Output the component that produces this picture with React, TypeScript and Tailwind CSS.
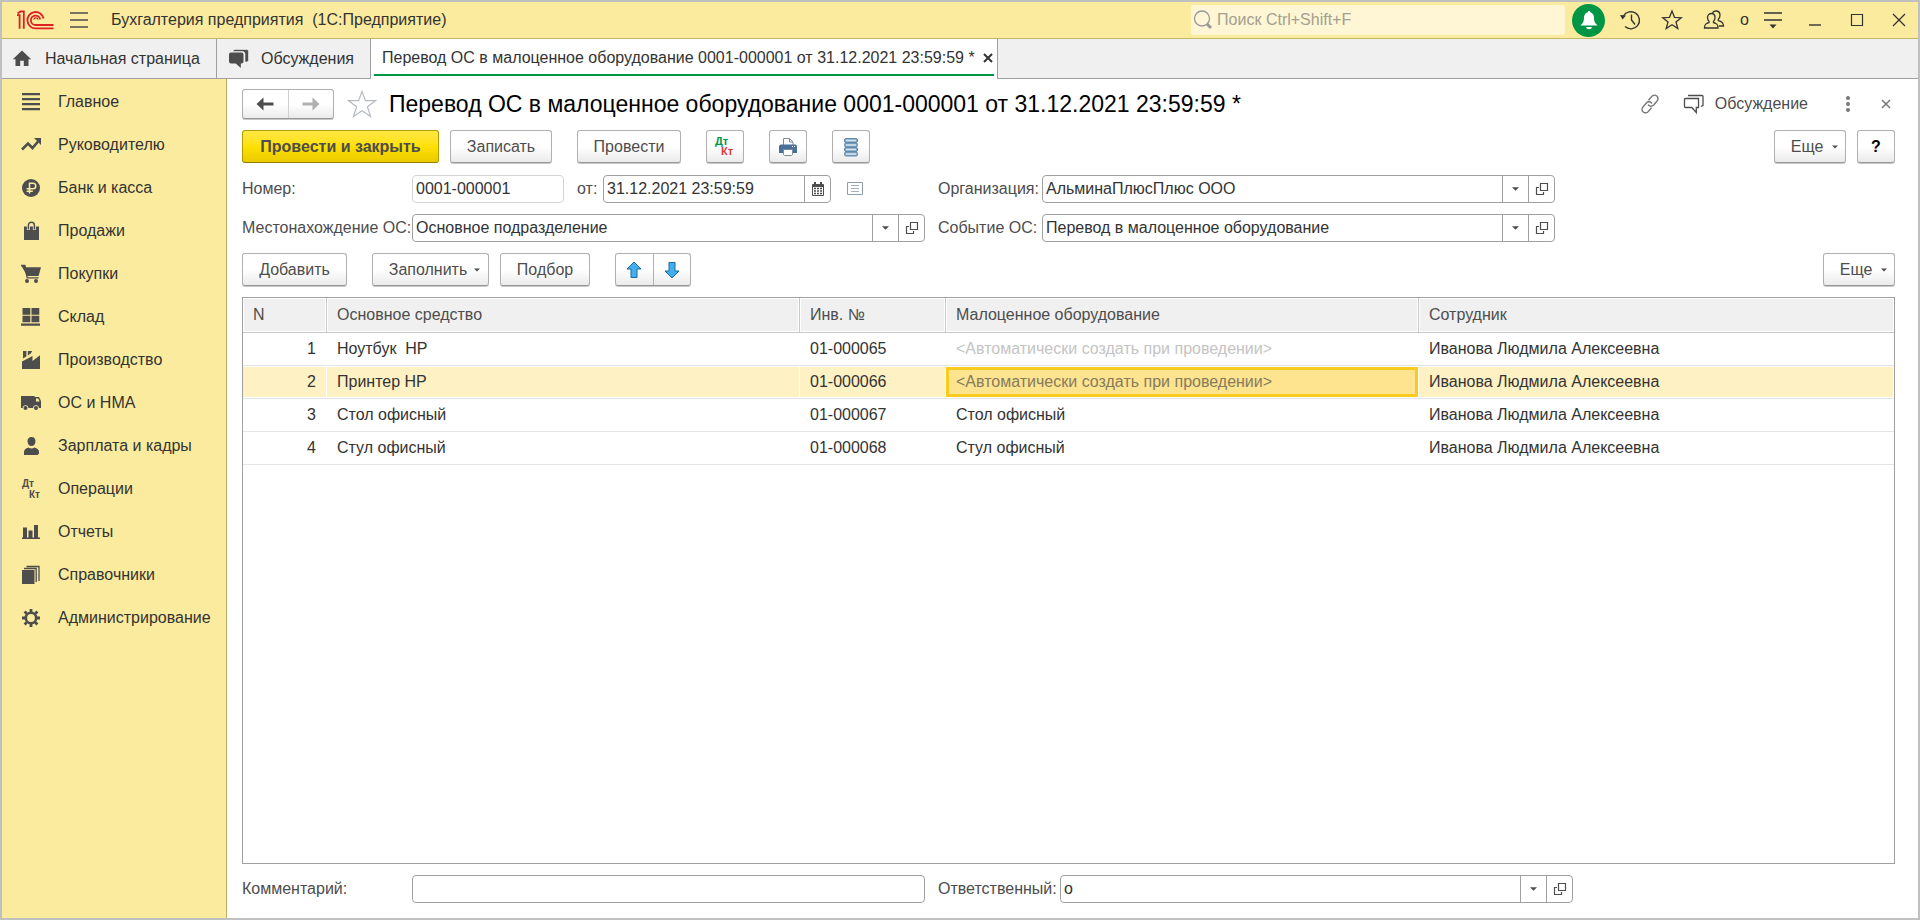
import React from 'react';

interface IconProps {
  children: React.ReactNode;
  w?: number;
  h?: number;
}

// Stroke/fill icons share one wrapper, colour comes from the parent text colour
const Icon: React.FC<IconProps> = ({ children, w = 20, h = 20 }) => (
  <svg width={w} height={h} viewBox={`0 0 ${w} ${h}`} fill="currentColor" className="shrink-0" aria-hidden="true">
    {children}
  </svg>
);

const Logo = () => (
  <svg width="38" height="20" viewBox="0 0 38 20" fill="none" stroke="#dd1f26" strokeWidth="1.8" aria-hidden="true">
    <path d="M0 5.2h2.6v13.6M0.6 3.6L3.6 1.4h3.2v17.4" />
    <path d="M26.6 8.5a8.2 8.2 0 1 0-7.8 9.9H36.5" />
    <path d="M23.2 9.4a4.7 4.7 0 1 0-4.4 5.6H36.5" />
    <path d="M21.2 9.6a2.4 2.4 0 0 0-4.6 0" strokeWidth="1.2" />
  </svg>
);

const TriangleDown = ({ w = 8 }: { w?: number }) => (
  <svg width={w} height="4" viewBox="0 0 8 4" fill="#4d4d4d" aria-hidden="true">
    <path d="M0 0h8L4 4z" />
  </svg>
);

const OpenIcon = () => (
  <Icon w={14} h={14}>
    <path d="M5.5 1.5h7v7h-7zM4 5.5H1.5v7h7V10" fill="none" stroke="#4d4d4d" strokeWidth="1.2" />
  </Icon>
);

interface MenuItem {
  label: string;
  icon: React.ReactNode;
}

const menuItems: MenuItem[] = [
  {
    label: 'Главное',
    icon: <path d="M1 1h18v2.2H1zM1 6h18v2.2H1zM1 11h18v2.2H1zM1 16h18v2.2H1z" />,
  },
  {
    label: 'Руководителю',
    icon: (
      <>
        <path d="M1 14.5L7 8.5l4.5 4.5 6-7" fill="none" stroke="currentColor" strokeWidth="2.6" />
        <path d="M13 3h7v7z" />
      </>
    ),
  },
  {
    label: 'Банк и касса',
    icon: (
      <>
        <circle cx="10" cy="10" r="9" />
        <path d="M8.5 15.5V5.2H12a2.8 2.8 0 0 1 0 5.6H5.6M5.6 13.2h6.2" fill="none" stroke="#fbeb9e" strokeWidth="1.5" />
      </>
    ),
  },
  {
    label: 'Продажи',
    icon: (
      <>
        <path d="M3 5.5h15V19H3z" />
        <path d="M7.4 9V4.4a3 3 0 0 1 6 0V9" fill="none" stroke="#fbeb9e" strokeWidth="3" />
        <path d="M7.4 8.5V4.2a3 3 0 0 1 6 0v4.3" fill="none" stroke="currentColor" strokeWidth="1.4" />
      </>
    ),
  },
  {
    label: 'Покупки',
    icon: (
      <>
        <path d="M0 1h4.4l.5 2.2H20L17.6 12H6.2z" />
        <path d="M0 1.5h3.6l2.6 12.3h11.4" fill="none" stroke="currentColor" strokeWidth="1.3" />
        <circle cx="6" cy="17" r="2" />
        <circle cx="15" cy="17" r="2" />
      </>
    ),
  },
  {
    label: 'Склад',
    icon: <path d="M1.5 1h7.8v6.8H1.5zM10.5 1h7.8v6.8h-7.8zM1.5 8.8h7.8v6.4H1.5zM10.5 8.8h7.8v6.4h-7.8zM0 16.4h19v2.4H0z" />,
  },
  {
    label: 'Производство',
    icon: <path d="M1 19v-7.5L11.5 6v5L19 5.2V19zM2 1h3.4v5.4L2 8.6zM6.8 1h4.4L9.8 3.4 6.8 5.6z" />,
  },
  {
    label: 'ОС и НМА',
    icon: (
      <>
        <path d="M0 3h13.6v12H0zM13 4h5l2 4v7h-7z" />
        <path d="M15 5.6h2.3l1.3 2.8H15z" fill="#fbeb9e" />
        <circle cx="4.5" cy="15" r="2.8" fill="#fbeb9e" />
        <circle cx="15" cy="15" r="2.8" fill="#fbeb9e" />
        <circle cx="4.5" cy="15" r="2" />
        <circle cx="15" cy="15" r="2" />
      </>
    ),
  },
  {
    label: 'Зарплата и кадры',
    icon: <path d="M10.5 1c2.7 0 4 1.8 4 4.3 0 2.6-1.6 4.8-4 4.8s-4-2.2-4-4.8C6.5 2.8 7.8 1 10.5 1zM3 19v-3c0-2.6 1.6-3.8 4.6-4.6 1.6 1.4 4.2 1.4 5.8 0 3 .8 4.6 2 4.6 4.6v1.5L16.5 19z" />,
  },
  {
    label: 'Операции',
    icon: (
      <>
        <text x="1" y="8" fontSize="10" fontWeight="bold" fontFamily="Liberation Sans, sans-serif">Дт</text>
        <text x="8" y="19" fontSize="10" fontWeight="bold" fontFamily="Liberation Sans, sans-serif">Кт</text>
      </>
    ),
  },
  {
    label: 'Отчеты',
    icon: <path d="M1 15.5h18V17H1zM2 5.5h4V16H2zM7.5 8.5h4v8h-4zM13 3h4v13h-4z" />,
  },
  {
    label: 'Справочники',
    icon: (
      <>
        <path d="M1 5h12.5v14H1z" />
        <path d="M3 3.5h12.2V17M5.5 1.5H18V16" fill="none" stroke="currentColor" strokeWidth="1.3" />
      </>
    ),
  },
  {
    label: 'Администрирование',
    icon: (
      <>
        <circle cx="10" cy="10" r="5.2" fill="none" stroke="currentColor" strokeWidth="2.6" />
        <path
          d="M10 1v3M10 16v3M1 10h3M16 10h3M3.6 3.6l2.2 2.2M14.2 14.2l2.2 2.2M3.6 16.4l2.2-2.2M14.2 5.8l2.2-2.2"
          stroke="currentColor"
          strokeWidth="2.8"
        />
      </>
    ),
  },
];

interface AssetRow {
  n: number;
  asset: string;
  inv: string;
  item: string;
  auto?: boolean;
  employee: string;
}

const AUTO_TEXT = '<Автоматически создать при проведении>';

const rows: AssetRow[] = [
  { n: 1, asset: 'Ноутбук  HP', inv: '01-000065', item: AUTO_TEXT, auto: true, employee: 'Иванова Людмила Алексеевна' },
  { n: 2, asset: 'Принтер HP', inv: '01-000066', item: AUTO_TEXT, auto: true, employee: 'Иванова Людмила Алексеевна' },
  { n: 3, asset: 'Стол офисный', inv: '01-000067', item: 'Стол офисный', employee: 'Иванова Людмила Алексеевна' },
  { n: 4, asset: 'Стул офисный', inv: '01-000068', item: 'Стул офисный', employee: 'Иванова Людмила Алексеевна' },
];

const SELECTED_ROW = 2;

const buttonBase =
  'flex h-[33px] shrink-0 items-center justify-center rounded-[3px] border border-[#b0b0b0] border-b-[#979797] bg-linear-to-b from-white from-50% to-[#ebebeb] text-[#4d4d4d] shadow-[0_1px_0_#c8c8c8]';

const Button: React.FC<{ className?: string; label?: string; children: React.ReactNode }> = ({
  className = '',
  label,
  children,
}) => (
  <button type="button" aria-label={label} className={`${buttonBase} ${className}`}>
    {children}
  </button>
);

interface ComboFieldProps {
  id: string;
  value: string;
  className: string;
}

const ComboField: React.FC<ComboFieldProps> = ({ id, value, className }) => (
  <div className={`flex h-7 shrink-0 overflow-hidden rounded-[4px] border border-[#a0a0a0] bg-white ${className}`}>
    <input id={id} type="text" defaultValue={value} className="min-w-0 flex-1 pl-[3px] text-[#333] outline-none" />
    <button type="button" aria-label="Выбрать" className="flex w-[26px] items-center justify-center border-l border-[#a0a0a0]">
      <TriangleDown w={7} />
    </button>
    <button type="button" aria-label="Открыть" className="flex w-[26px] items-center justify-center border-l border-[#a0a0a0]">
      <OpenIcon />
    </button>
  </div>
);

const TitleBar = () => (
  <header className="flex h-[37px] shrink-0 items-center border-b border-[#c4b763] bg-[#fbeb9e] pl-[15px] pr-3 text-[#333]">
    <Logo />
    <button type="button" aria-label="Меню" className="ml-[14px]">
      <Icon w={20} h={16}>
        <path d="M1 1h18M1 8h18M1 15h18" stroke="#4d4d4d" strokeWidth="1.5" />
      </Icon>
    </button>
    <h1 className="ml-[22px] whitespace-pre">Бухгалтерия предприятия  (1С:Предприятие)</h1>
    <label className="ml-auto flex h-[30px] w-[374px] items-center gap-1 rounded-[3px] bg-[#fef6d4] pl-[2px]">
      <Icon>
        <circle cx="9" cy="8.5" r="7.5" fill="none" stroke="#999" strokeWidth="1.3" />
        <path d="M14 14l4 4" stroke="#999" strokeWidth="3" />
      </Icon>
      <input
        type="search"
        aria-label="Поиск"
        placeholder="Поиск Ctrl+Shift+F"
        className="min-w-0 flex-1 outline-none placeholder:text-[#a3a08f]"
      />
    </label>
    <div className="flex items-center">
      <button type="button" aria-label="Уведомления" className="ml-[7px] flex size-[33px] items-center justify-center rounded-full bg-[#009646] text-white">
        <Icon>
          <path d="M10 1c.8 0 1.2.5 1.2 1.2C14 3 15 5.2 15 8c0 3.5 1 5 3.5 7.5h-17C4 13 5 11.5 5 8c0-2.8 1-5 3.8-5.8C8.800 1.500 9.200 1 10 1zM7 17h6c-.5 1.500-1.500 2.200-3 2.200S7.500 18.500 7 17z" />
        </Icon>
      </button>
      <button type="button" aria-label="История" className="ml-[15px]">
        <Icon w={22} h={22}>
          <path d="M3.4 7A8.6 8.6 0 1 1 5 17.6M11.5 5.5V11l3.5 4.5" fill="none" stroke="#333" strokeWidth="1.4" />
          <path d="M0 6l6 .5L2.5 10.5z" fill="#333" />
        </Icon>
      </button>
      <button type="button" aria-label="Избранное" className="ml-[19px]">
        <Icon w={22} h={22}>
          <path d="M11 2l2.5 6.3 6.7.4-5.2 4.2 1.8 6.6L11 15.8l-5.8 3.7L7 12.9 1.8 8.7l6.7-.4z" fill="none" stroke="#333" strokeWidth="1.3" />
        </Icon>
      </button>
      <button type="button" aria-label="Пользователи" className="ml-[20px]">
        <Icon w={22} h={22}>
          <g fill="none" stroke="#333" strokeWidth="1.3">
            <path d="M8.5 4.5c2.4 0 3.5 1.7 3.5 4 0 1.8-.6 3-1.5 3.8v1.2c3 .8 4.5 1.7 4.5 5.5H1.5c0-3.8 1.5-4.7 4.5-5.5v-1.2c-.9-.8-1.5-2-1.5-3.8 0-2.3 1.6-4 4-4z" />
            <path d="M9.5 3.8C10.3 2.5 11.5 2 13 2c2.6 0 4 1.7 4 4.2 0 1.8-.6 3-1.7 4v1.4c3.5.8 5.2 2 5.2 5.4h-4.7" />
          </g>
        </Icon>
      </button>
      <span className="ml-[15px]">о</span>
      <button type="button" aria-label="Настройки" className="ml-[14px]">
        <Icon w={20} h={18}>
          <path d="M1 2h18M1 9h18" stroke="#333" strokeWidth="1.5" />
          <path d="M6.5 13.5h7L10 17.5z" />
        </Icon>
      </button>
      <button type="button" aria-label="Свернуть" className="ml-[25px]">
        <Icon w={14} h={14}>
          <path d="M1 12h12" stroke="#333" strokeWidth="1.4" />
        </Icon>
      </button>
      <button type="button" aria-label="Развернуть" className="ml-[28px]">
        <Icon w={14} h={14}>
          <path d="M1.5 1.5h11v11h-11z" fill="none" stroke="#333" strokeWidth="1.2" />
        </Icon>
      </button>
      <button type="button" aria-label="Закрыть окно" className="ml-[28px]">
        <Icon w={14} h={14}>
          <path d="M1 1l12 12M13 1L1 13" stroke="#333" strokeWidth="1.3" />
        </Icon>
      </button>
    </div>
  </header>
);

const TabBar = () => (
  <nav className="flex h-10 shrink-0 border-b border-[#a0a0a0] bg-[#f0f0f0] text-[#333]">
    <button type="button" className="flex w-[215px] items-center border-r border-[#a0a0a0] pl-[10px]">
      <span className="text-[#4d4d4d]">
        <Icon>
          <path d="M10 1.5L0.8 10.3h2.7V17h4.7v-5.3h3.6V17h4.7v-6.7h2.7z" />
        </Icon>
      </span>
      <span className="ml-[13px]">Начальная страница</span>
    </button>
    <button type="button" className="flex w-[154px] items-center border-r border-[#a0a0a0] pl-[11px]">
      <span className="text-[#4d4d4d]">
        <Icon w={21} h={21}>
          <path d="M3 4.5h10.5a2 2 0 0 1 2 2v7a2 2 0 0 1-2 2h-.7v4.5l-5-4.5H3a2 2 0 0 1-2-2v-7a2 2 0 0 1 2-2z" />
          <path d="M5 3.5c0-1 .8-2 2-2h11.5c1 0 2 .8 2 2v8.5c0 1-.7 1.8-2 2h-1.5V6c0-1.500-1-2.500-2.500-2.500H5z" stroke="#f0f0f0" strokeWidth=".6" />
        </Icon>
      </span>
      <span className="ml-3">Обсуждения</span>
    </button>
    <div className="-mb-px flex w-[627px] border-r border-[#a0a0a0] bg-white px-[3px] pb-[3px]">
      <div className="flex flex-1 items-center justify-between whitespace-nowrap border-b-2 border-[#009646] pl-2 pt-[3px]">
        <button type="button">Перевод ОС в малоценное оборудование 0001-000001 от 31.12.2021 23:59:59 *</button>
        <button type="button" aria-label="Закрыть вкладку">
          <Icon w={12} h={12}>
            <path d="M2 2l8 8M10 2l-8 8" stroke="#333" strokeWidth="2" />
          </Icon>
        </button>
      </div>
    </div>
  </nav>
);

const Sidebar = () => (
  <aside className="w-[225px] shrink-0 border-r border-[#b8ad62] bg-[#fbeb9e] pt-px">
    <ul>
      {menuItems.map((item) => (
        <li key={item.label}>
          <button type="button" className="flex h-[43px] w-full items-center gap-[17px] pl-[19px] text-[#333]">
            <span className="text-[#4d4d4d]">
              <Icon>{item.icon}</Icon>
            </span>
            {item.label}
          </button>
        </li>
      ))}
    </ul>
  </aside>
);

const FormHeader = () => (
  <div className="flex h-[30px] items-center">
    <div className="flex h-[30px] w-[92px] rounded-[3px] border border-[#b0b0b0] border-b-[#979797] bg-linear-to-b from-white from-50% to-[#ebebeb] shadow-[0_1px_0_#c8c8c8]">
      <button type="button" aria-label="Назад" className="flex flex-1 items-center justify-center border-r border-[#cfcfcf] text-[#4d4d4d]">
        <Icon>
          <path d="M1.5 10L8.5 3.5v5h10v3h-10v5z" />
        </Icon>
      </button>
      <button type="button" aria-label="Вперед" className="flex flex-1 items-center justify-center text-[#b0b0b0]">
        <Icon>
          <path d="M18.5 10l-7-6.5v5h-10v3h10v5z" />
        </Icon>
      </button>
    </div>
    <button type="button" aria-label="В избранное" className="ml-[13px]">
      <Icon w={30} h={30}>
        <path d="M15 2.5l3.4 9.1 10 .1-8 6 3.2 9.8L15 21.7l-8.6 5.8 3.2-9.8-8-6 10-.1z" fill="none" stroke="#b4bac2" strokeWidth="1.2" />
      </Icon>
    </button>
    <h2 className="ml-3 whitespace-nowrap text-[23px] text-black">
      Перевод ОС в малоценное оборудование 0001-000001 от 31.12.2021 23:59:59 *
    </h2>
    <div className="ml-auto flex items-center text-[#4d4d4d]">
      <button type="button" aria-label="Ссылка">
        <Icon w={22} h={22}>
          <g fill="none" stroke="#777" strokeWidth="1.5" strokeLinecap="round" transform="rotate(-50 11 11)">
            <path d="M8.5 14.5H4a3.5 3.5 0 0 1 0-7h5.5a3.5 3.5 0 0 1 3.3 4M13.5 7.5H18a3.5 3.5 0 0 1 0 7h-5.5a3.5 3.5 0 0 1-3.3-4" />
          </g>
        </Icon>
      </button>
      <button type="button" className="ml-[22px] flex items-center gap-[10px]">
        <Icon w={22} h={22}>
          <path d="M2.5 5.5h13v9h-2.2v5l-4.5-5H2.5a1 1 0 0 1-1-1v-7a1 1 0 0 1 1-1zM5 2.5h14a1 1 0 0 1 1 1v9l-2 1" fill="none" stroke="#4d4d4d" strokeWidth="1.3" />
        </Icon>
        Обсуждение
      </button>
      <button type="button" aria-label="Дополнительно" className="ml-[37px] text-[#777]">
        <Icon w={6} h={18}>
          <circle cx="3" cy="3" r="2" />
          <circle cx="3" cy="9" r="2" />
          <circle cx="3" cy="15" r="2" />
        </Icon>
      </button>
      <button type="button" aria-label="Закрыть" className="ml-[29px] mr-[3px]">
        <Icon w={12} h={12}>
          <path d="M2 2l8 8M10 2l-8 8" stroke="#777" strokeWidth="1.5" />
        </Icon>
      </button>
    </div>
  </div>
);

const CommandBar = () => (
  <div className="mt-[11px] flex">
    <button
      type="button"
      className="h-[33px] w-[197px] rounded-[3px] border border-[#b09b00] border-b-[#8f7e00] bg-linear-to-b from-[#ffe83f] via-[#ffe000] to-[#ebcb00] font-bold text-[#4d4d4d]"
    >
      Провести и закрыть
    </button>
    <Button className="ml-[11px] w-[102px]">Записать</Button>
    <Button className="ml-[25px] w-[104px]">Провести</Button>
    <Button className="ml-[25px] w-[38px]" label="Показать проводки">
      <Icon w={22} h={22}>
        <text x="1" y="9" fontSize="11" fontWeight="bold" fontFamily="Liberation Sans, sans-serif" fill="#009646">Дт</text>
        <text x="7" y="19" fontSize="11" fontWeight="bold" fontFamily="Liberation Sans, sans-serif" fill="#e0393e">Кт</text>
      </Icon>
    </Button>
    <Button className="ml-[25px] w-[38px]" label="Печать">
      <Icon>
        <path d="M5.5 8V1.5h6l3.5 3.5v3" fill="#fff" stroke="#7d8a99" />
        <path d="M11.5 1.5V5H15" fill="none" stroke="#7d8a99" />
        <path d="M3 7.5h14a2 2 0 0 1 2 2V16H1V9.5a2 2 0 0 1 2-2z" fill="#4a6f98" />
        <path d="M14 9h1v1h-1zM16 9h1v1h-1z" fill="#fff" />
        <path d="M5.5 12.5h9v5l-1 1h-7l-1-1z" fill="#fff" stroke="#7d8a99" />
      </Icon>
    </Button>
    <Button className="ml-[25px] w-[38px]" label="Реестр">
      <Icon>
        <g fill="#86a9c6" stroke="#6088aa">
          <rect x="3.5" y="1.5" width="13" height="4" rx="1.5" />
          <rect x="3.5" y="6" width="13" height="4" rx="1.5" />
          <rect x="3.5" y="10.5" width="13" height="4" rx="1.5" />
          <rect x="3.5" y="15" width="13" height="4" rx="1.5" />
        </g>
        <path d="M5 3.5h10M5 8h10M5 12.5h10M5 17h10" stroke="#d3e4f1" strokeWidth="1.3" />
      </Icon>
    </Button>
    <Button className="ml-auto w-[72px] gap-[9px] pl-[9px]">
      Еще
      <TriangleDown w={6} />
    </Button>
    <Button className="ml-[11px] w-[38px] font-bold text-black">?</Button>
  </div>
);

const Fields = () => (
  <div className="mt-3 flex flex-col gap-[11px] text-[#4d4d4d]">
    <div className="flex items-center">
      <label htmlFor="number" className="w-[170px] shrink-0">Номер:</label>
      <div className="flex w-[526px] shrink-0 items-center">
        <input
          id="number"
          type="text"
          readOnly
          defaultValue="0001-000001"
          className="h-7 w-[152px] rounded-[4px] border border-[#d4d4d4] pl-[3px] text-[#333] outline-none"
        />
        <label htmlFor="date" className="ml-[13px] w-[26px]">от:</label>
        <div className="flex h-7 w-[228px] overflow-hidden rounded-[4px] border border-[#a0a0a0]">
          <input id="date" type="text" defaultValue="31.12.2021 23:59:59" className="min-w-0 flex-1 pl-[3px] text-[#333] outline-none" />
          <button type="button" aria-label="Календарь" className="flex w-[26px] items-center justify-center border-l border-[#a0a0a0]">
            <Icon w={12} h={14}>
              <path d="M1 2h10a1 1 0 0 1 1 1v10a1 1 0 0 1-1 1H1a1 1 0 0 1-1-1V3a1 1 0 0 1 1-1z" fill="#4d4d4d" />
              <path d="M2 0h2v3H2zM8 0h2v3H8z" fill="#4d4d4d" />
              <path d="M1 5h10v8H1z" fill="#fff" />
              <path d="M2 6.5h9M2 9h9M2 11.5h9" stroke="#4d4d4d" strokeWidth="1.6" strokeDasharray="2 1" />
            </Icon>
          </button>
        </div>
        <button type="button" aria-label="Список" className="ml-4">
          <Icon w={16} h={14}>
            <path d="M.5.5h15v12H.5z" fill="#fff" stroke="#8d9db0" />
            <path d="M4 3.5h8M4 6.5h8M4 9.5h8" stroke="#a3afbd" />
          </Icon>
        </button>
      </div>
      <label htmlFor="organization" className="w-[104px] shrink-0">Организация:</label>
      <ComboField id="organization" value="АльминаПлюсПлюс ООО" className="w-[513px]" />
    </div>
    <div className="flex items-center">
      <label htmlFor="location" className="w-[170px] shrink-0 whitespace-nowrap">Местонахождение ОС:</label>
      <ComboField id="location" value="Основное подразделение" className="w-[513px]" />
      <label htmlFor="event" className="ml-[13px] w-[104px] shrink-0">Событие ОС:</label>
      <ComboField id="event" value="Перевод в малоценное оборудование" className="w-[513px]" />
    </div>
  </div>
);

const arrowPath = 'M10 2l7 7h-4v8.5H7V9H3z';

const TableCommands = () => (
  <div className="mt-[11px] flex">
    <Button className="w-[105px]">Добавить</Button>
    <Button className="ml-[25px] w-[117px] gap-[7px] pl-2">
      Заполнить
      <TriangleDown w={6} />
    </Button>
    <Button className="ml-[11px] w-[90px]">Подбор</Button>
    <div className="ml-[25px] flex h-[33px] w-[76px] rounded-[3px] border border-[#b0b0b0] border-b-[#979797] bg-linear-to-b from-white from-50% to-[#ebebeb] shadow-[0_1px_0_#c8c8c8]">
      <button type="button" aria-label="Вверх" className="flex flex-1 items-center justify-center border-r border-[#b0b0b0]">
        <Icon>
          <path d={arrowPath} fill="#43aef0" stroke="#1b6a9c" />
        </Icon>
      </button>
      <button type="button" aria-label="Вниз" className="flex flex-1 items-center justify-center">
        <Icon>
          <path d={arrowPath} fill="#43aef0" stroke="#1b6a9c" transform="rotate(180 10 10)" />
        </Icon>
      </button>
    </div>
    <Button className="ml-auto w-[72px] gap-[9px] pl-[9px]">
      Еще
      <TriangleDown w={6} />
    </Button>
  </div>
);

const headers = ['N', 'Основное средство', 'Инв. №', 'Малоценное оборудование', 'Сотрудник'];

const AssetTable = () => (
  <div className="mt-[11px] min-h-0 flex-1 overflow-auto border border-[#a0a0a0] bg-white">
    <table className="w-full table-fixed border-separate border-spacing-0 text-[#333]">
      <colgroup>
        <col className="w-[84px]" />
        <col />
        <col className="w-[146px]" />
        <col />
        <col className="w-[475px]" />
      </colgroup>
      <thead>
        <tr>
          {headers.map((title) => (
            <th key={title} className="h-[35px] border-b border-r border-[#c8c8c8] p-px text-left font-normal text-[#4d4d4d] last:border-r-0">
              <div className="flex h-8 items-center bg-[#f0f0f0] pl-[9px]">{title}</div>
            </th>
          ))}
        </tr>
      </thead>
      <tbody>
        {rows.map((row) => {
          const selected = row.n === SELECTED_ROW;
          const cell = `flex h-[30px] items-center whitespace-pre px-[10px] ${selected ? 'bg-[#fef2c5]' : ''}`;
          const td = 'border-b border-[#e4e4e4] py-px pl-0 pr-px';
          return (
            <tr key={row.n} aria-selected={selected}>
              <td className={td}>
                <div className={`${cell} justify-end`}>{row.n}</div>
              </td>
              <td className={td}>
                <div className={cell}>{row.asset}</div>
              </td>
              <td className={td}>
                <div className={cell}>{row.inv}</div>
              </td>
              <td className={td}>
                {selected ? (
                  <div className="flex h-[30px] items-center whitespace-pre border-3 border-[#facb1f] bg-[#fee48f] px-[7px] text-[#857b5d]">
                    {row.item}
                  </div>
                ) : (
                  <div className={`${cell} ${row.auto ? 'text-[#c4c4c4]' : ''}`}>{row.item}</div>
                )}
              </td>
              <td className={td}>
                <div className={cell}>{row.employee}</div>
              </td>
            </tr>
          );
        })}
      </tbody>
    </table>
  </div>
);

const FormFooter = () => (
  <div className="mb-[15px] mt-[11px] flex items-center text-[#4d4d4d]">
    <label htmlFor="comment" className="w-[170px] shrink-0">Комментарий:</label>
    <input id="comment" type="text" className="h-7 w-[513px] rounded-[4px] border border-[#a0a0a0] pl-[3px] text-[#333] outline-none" />
    <label htmlFor="responsible" className="ml-[13px] w-[122px] shrink-0">Ответственный:</label>
    <ComboField id="responsible" value="о" className="w-[513px]" />
  </div>
);

const App: React.FC = () => {
  return (
    <div className="flex h-screen flex-col overflow-hidden border-2 border-[#c0c0c0] bg-white font-['Liberation_Sans',Arial,sans-serif] text-[16px] leading-5">
      <TitleBar />
      <TabBar />
      <div className="flex min-h-0 flex-1">
        <Sidebar />
        <main className="flex min-w-0 flex-1 flex-col pl-[15px] pr-[23px] pt-[10px]">
          <FormHeader />
          <CommandBar />
          <Fields />
          <TableCommands />
          <AssetTable />
          <FormFooter />
        </main>
      </div>
    </div>
  );
};

export default App;
